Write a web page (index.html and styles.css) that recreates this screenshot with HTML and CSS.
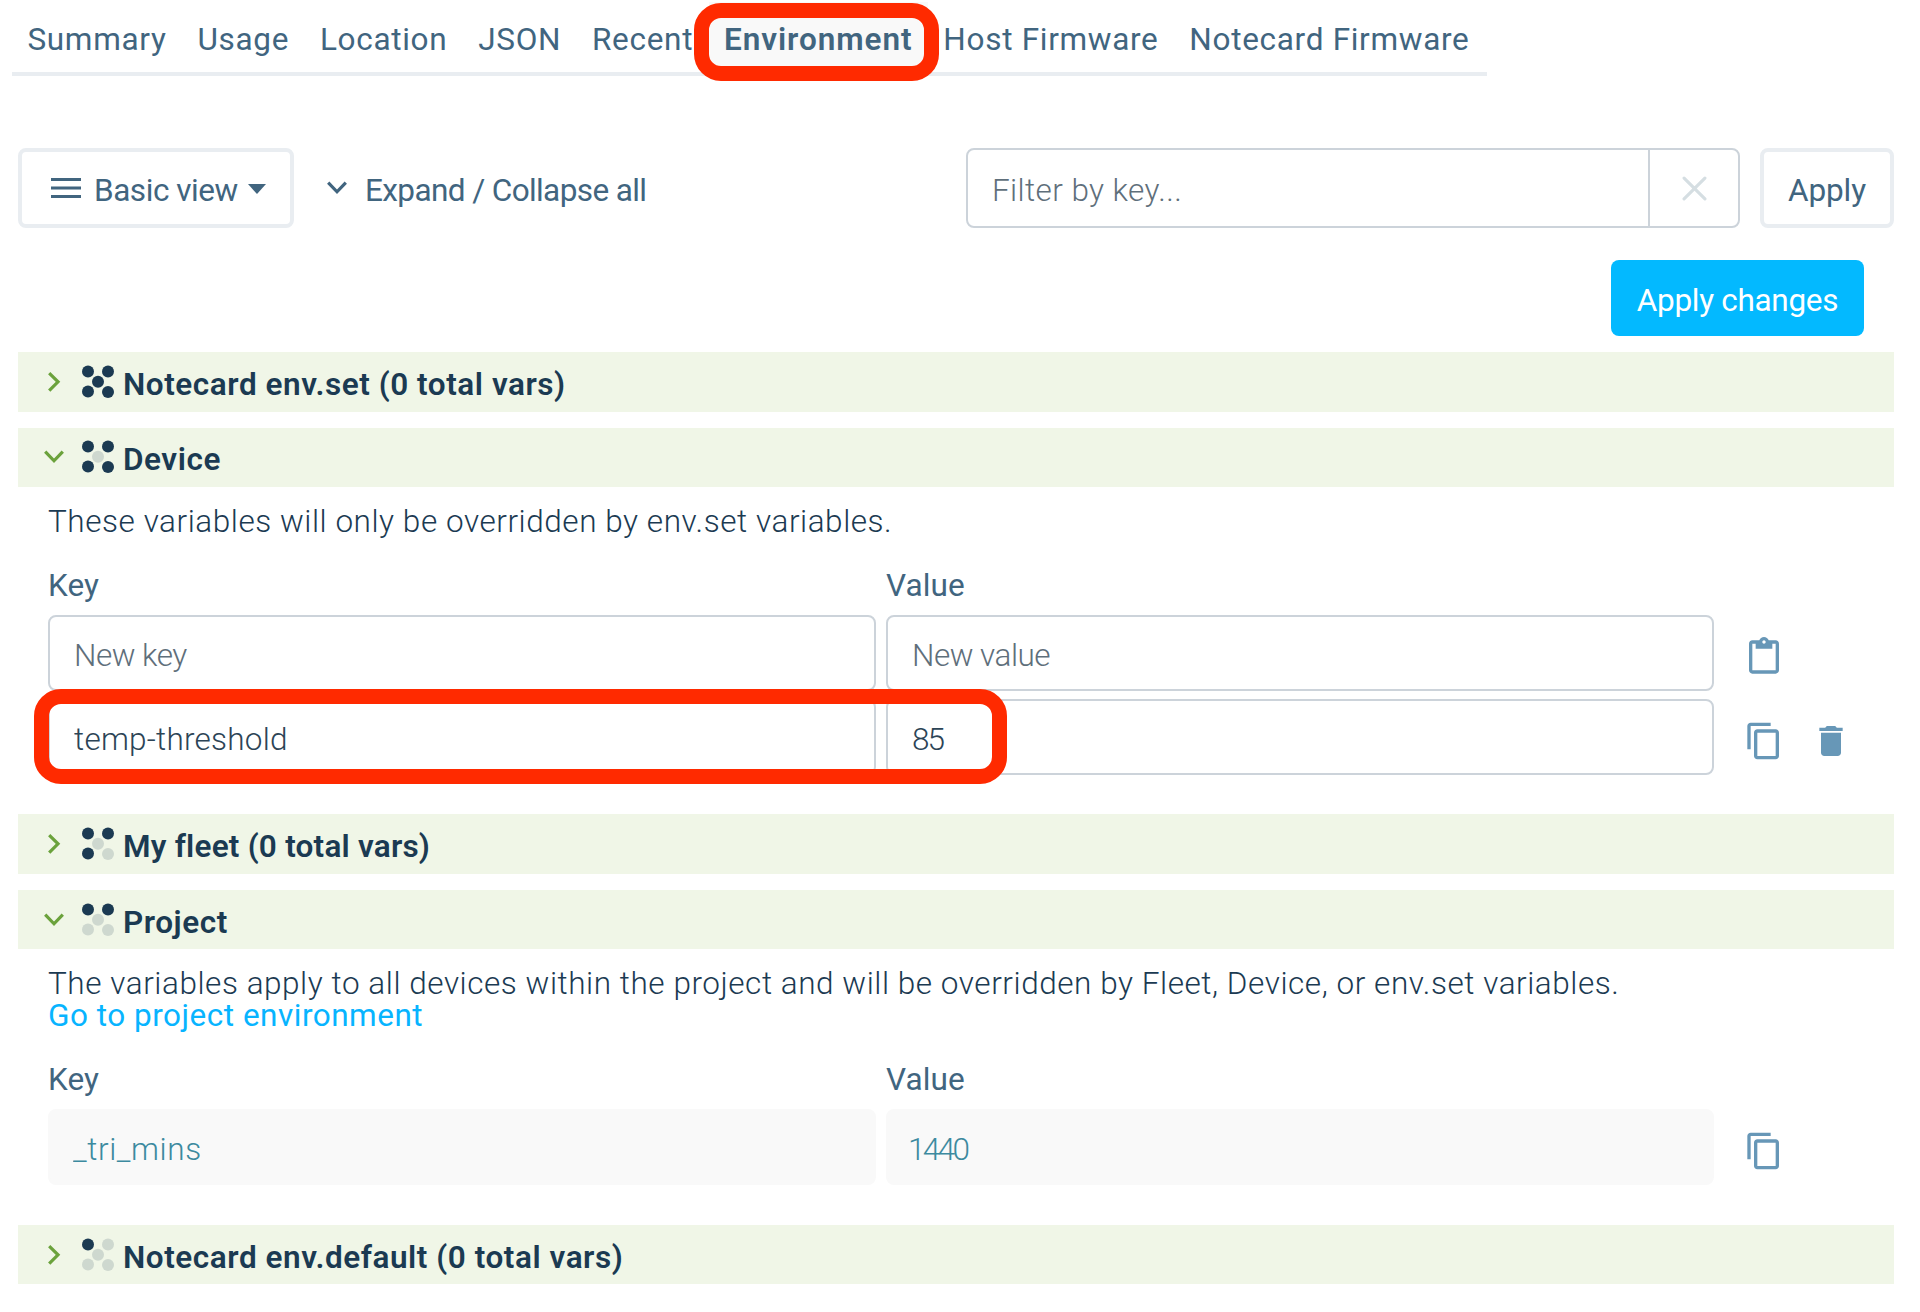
FILE: index.html
```html
<!DOCTYPE html>
<html lang="en">

<head>
    <meta charset="UTF-8">
    <meta name="viewport" content="width=device-width, initial-scale=1.0">
    <title>Device Environment</title>
    <link rel="stylesheet" href="styles.css">
</head>

<body>
    <!-- shared icons -->
    <svg class="sprite" width="0" height="0">
        <symbol id="chevron-right" viewBox="0 0 20 20">
            <path d="M5.2 1.2l8.8 8.6-8.8 8.8" fill="none" stroke="currentColor" stroke-width="3.2" />
        </symbol>
        <symbol id="chevron-down" viewBox="0 0 20 20">
            <path d="M1.2 4.6l8.8 9.2 8.8-9.2" fill="none" stroke="currentColor" stroke-width="3.2" />
        </symbol>
        <symbol id="copy" viewBox="0 0 24 24">
            <path d="M16 1H4c-1.1 0-2 .9-2 2v14h2V3h12V1zm3 4H8c-1.1 0-2 .9-2 2v14c0 1.1.9 2 2 2h11c1.1 0 2-.9 2-2V7c0-1.1-.9-2-2-2zm0 16H8V7h11v14z" />
        </symbol>
        <symbol id="paste" viewBox="0 0 24 24">
            <path d="M19 2h-4.18C14.4.84 13.3 0 12 0c-1.3 0-2.4.84-2.82 2H5c-1.1 0-2 .9-2 2v16c0 1.1.9 2 2 2h14c1.1 0 2-.9 2-2V4c0-1.1-.9-2-2-2zm-7 0c.55 0 1 .45 1 1s-.45 1-1 1-1-.45-1-1 .45-1 1-1zm7 18H5V4h2v3h10V4h2v16z" />
        </symbol>
        <symbol id="trash" viewBox="0 0 24 24">
            <path d="M6 19c0 1.1.9 2 2 2h8c1.1 0 2-.9 2-2V7H6v12zM19 4h-3.5l-1-1h-5l-1 1H5v2h14V4z" />
        </symbol>
    </svg>

    <nav class="tabs">
        <a class="tab">Summary</a>
        <a class="tab">Usage</a>
        <a class="tab">Location</a>
        <a class="tab">JSON</a>
        <a class="tab">Recent</a>
        <a class="tab active">Environment<span class="callout callout-tab"></span></a>
        <a class="tab">Host Firmware</a>
        <a class="tab">Notecard Firmware</a>
    </nav>

    <div class="toolbar">
        <button class="btn view-btn">
            <svg class="menu-icon" viewBox="0 0 30 20">
                <path d="M0 1.6h30M0 10h30M0 18.4h30" stroke="currentColor" stroke-width="3" />
            </svg>
            Basic view
            <span class="caret"></span>
        </button>
        <button class="expand-btn">
            <svg class="chevron"><use href="#chevron-down" /></svg>
            Expand / Collapse all
        </button>
        <div class="filter">
            <input type="text" class="filter-input" placeholder="Filter by key...">
            <button class="clear-btn">
                <svg class="clear-icon" viewBox="0 0 24 24">
                    <path d="M2 2l20 20M22 2L2 22" stroke="currentColor" stroke-width="3" stroke-linecap="round" />
                </svg>
            </button>
        </div>
        <button class="btn apply-btn">Apply</button>
    </div>

    <div class="actions">
        <button class="primary-btn">Apply changes</button>
    </div>

    <main class="sections">
        <section>
            <h2 class="section-header">
                <svg class="chevron"><use href="#chevron-right" /></svg>
                <svg class="dots" viewBox="0 0 32 34">
                    <circle class="on" cx="6" cy="6.5" r="6" />
                    <circle class="on" cx="26" cy="6.5" r="6" />
                    <circle class="on" cx="16" cy="16.8" r="6" />
                    <circle class="on" cx="6" cy="26.5" r="6" />
                    <circle class="on" cx="26" cy="27" r="6" />
                </svg>
                Notecard env.set (0 total vars)
            </h2>
        </section>

        <section>
            <h2 class="section-header">
                <svg class="chevron"><use href="#chevron-down" /></svg>
                <svg class="dots" viewBox="0 0 32 34">
                    <circle class="on" cx="6" cy="6.5" r="6" />
                    <circle class="on" cx="26" cy="6.5" r="6" />
                    <circle cx="16" cy="16.8" r="6" />
                    <circle class="on" cx="6" cy="26.5" r="6" />
                    <circle class="on" cx="26" cy="27" r="6" />
                </svg>
                Device
            </h2>
            <div class="section-body">
                <p class="description">These variables will only be overridden by env.set variables.</p>
                <div class="row labels">
                    <label>Key</label>
                    <label>Value</label>
                </div>
                <div class="row">
                    <input type="text" placeholder="New key">
                    <input type="text" placeholder="New value">
                    <svg class="icon"><use href="#paste" /></svg>
                </div>
                <div class="row">
                    <input type="text" class="key" value="temp-threshold">
                    <input type="text" class="number" value="85">
                    <svg class="icon"><use href="#copy" /></svg>
                    <svg class="icon"><use href="#trash" /></svg>
                    <span class="callout callout-row"></span>
                </div>
            </div>
        </section>

        <section>
            <h2 class="section-header fleet">
                <svg class="chevron"><use href="#chevron-right" /></svg>
                <svg class="dots" viewBox="0 0 32 34">
                    <circle class="on" cx="6" cy="6.5" r="6" />
                    <circle class="on" cx="26" cy="6.5" r="6" />
                    <circle cx="16" cy="16.8" r="6" />
                    <circle class="on" cx="6" cy="26.5" r="6" />
                    <circle cx="26" cy="27" r="6" />
                </svg>
                My fleet (0 total vars)
            </h2>
        </section>

        <section>
            <h2 class="section-header">
                <svg class="chevron"><use href="#chevron-down" /></svg>
                <svg class="dots" viewBox="0 0 32 34">
                    <circle class="on" cx="6" cy="6.5" r="6" />
                    <circle class="on" cx="26" cy="6.5" r="6" />
                    <circle cx="16" cy="16.8" r="6" />
                    <circle cx="6" cy="26.5" r="6" />
                    <circle cx="26" cy="27" r="6" />
                </svg>
                Project
            </h2>
            <div class="section-body">
                <p class="description">The variables apply to all devices within the project and will be overridden by Fleet, Device, or env.set variables.</p>
                <a class="project-link">Go to project environment</a>
                <div class="row labels">
                    <label>Key</label>
                    <label>Value</label>
                </div>
                <div class="row">
                    <input type="text" class="key" value="_tri_mins" disabled>
                    <input type="text" class="number" value="1440" disabled>
                    <svg class="icon"><use href="#copy" /></svg>
                </div>
            </div>
        </section>

        <section>
            <h2 class="section-header">
                <svg class="chevron"><use href="#chevron-right" /></svg>
                <svg class="dots" viewBox="0 0 32 34">
                    <circle class="on" cx="6" cy="6.5" r="6" />
                    <circle cx="26" cy="6.5" r="6" />
                    <circle cx="16" cy="16.8" r="6" />
                    <circle cx="6" cy="26.5" r="6" />
                    <circle cx="26" cy="27" r="6" />
                </svg>
                Notecard env.default (0 total vars)
            </h2>
        </section>
    </main>
</body>

</html>
```

FILE: styles.css
```css
* {
    box-sizing: border-box;
}

body {
    margin: 0;
    background-color: #fff;
    color: #1b3a52;
    font-family: Roboto, "Liberation Sans", sans-serif;
    font-size: 31.5px;
    line-height: 32px;
}

button,
input {
    font: inherit;
    color: inherit;
    margin: 0;
}

button {
    background: none;
    border: none;
    font-weight: 450;
    letter-spacing: -0.45px;
    color: #41657f;
    white-space: nowrap;
}

.sprite {
    display: block;
}

/* tabs */
.tabs {
    display: flex;
    width: 1475px;
    height: 76px;
    margin-left: 12px;
    padding-top: 2px;
    border-bottom: 4px solid #e9edf1;
}

.tab {
    padding: 22px 15.4px 0;
    font-weight: 450;
    letter-spacing: 0.7px;
    color: #41657f;
    white-space: nowrap;
}

.tab.active {
    position: relative;
    background-color: #f9f9f9;
    font-weight: 600;
    letter-spacing: 0.95px;
}

/* red highlight drawn over the page */
.callout {
    position: absolute;
    border: 15px solid #ff2a00;
    border-radius: 27px;
    pointer-events: none;
    z-index: 1;
}

.callout-tab {
    left: -15px;
    top: 1px;
    width: 245px;
    height: 78px;
}

.callout-row {
    left: -14px;
    top: -10px;
    width: 973px;
    height: 95px;
}

/* toolbar */
.toolbar {
    display: flex;
    height: 80px;
    margin: 72px 26px 0 18px;
}

.btn {
    border: 4px solid #e9edf1;
    border-radius: 8px;
    padding: 6px 0 0;
}

.view-btn {
    display: flex;
    align-items: center;
    width: 276px;
    padding-left: 29px;
}

.menu-icon {
    width: 30px;
    height: 20px;
    margin: -6px 13px 0 0;
}

.caret {
    margin: -5px 0 0 10px;
    border: 9px solid transparent;
    border-top: 10px solid #41657f;
    border-bottom: 0;
}

.chevron {
    width: 20px;
    height: 20px;
    flex-shrink: 0;
}

.expand-btn {
    display: flex;
    align-items: center;
    gap: 18px;
    padding: 6px 0 0 33px;
    letter-spacing: -0.6px;
}

.expand-btn .chevron {
    margin-top: -6px;
}

.filter {
    display: flex;
    width: 774px;
    margin-left: auto;
    border: 2px solid #ccd3da;
    border-radius: 8px;
}

.filter-input {
    flex: 1;
    min-width: 0;
    padding: 4px 24px 0;
    border: none;
    background: none;
    font-weight: 300;
    letter-spacing: 0.4px;
}

::placeholder {
    color: #5f6f7b;
    opacity: 1;
}

.clear-btn {
    display: flex;
    align-items: center;
    justify-content: center;
    width: 90px;
    padding: 0;
    border-left: 2px solid #ccd3da;
    color: #d5dee2;
}

.clear-icon {
    width: 25px;
    height: 25px;
}

.apply-btn {
    width: 134px;
    margin-left: 20px;
    letter-spacing: -0.1px;
}

.actions {
    display: flex;
    justify-content: flex-end;
    padding: 32px 56px 16px 0;
}

.primary-btn {
    width: 253px;
    height: 76px;
    padding: 6px 0 0;
    border-radius: 8px;
    background-color: #03b9ff;
    color: #fff;
    letter-spacing: -0.3px;
}

/* variable sections */
.sections {
    display: flex;
    flex-direction: column;
    gap: 16px;
    margin: 0 26px 0 18px;
}

.section-header {
    display: flex;
    align-items: center;
    height: 59.5px;
    margin: 0;
    padding: 6px 26px 0;
    background-color: #f0f6e7;
    font-size: inherit;
    font-weight: 560;
    letter-spacing: 0.55px;
}

.section-header.fleet {
    letter-spacing: 0.22px;
}

.section-header .chevron {
    margin-top: -6px;
    color: #6ba23c;
}

.dots {
    width: 32px;
    height: 34px;
    margin: -6px 9px 0 18px;
    fill: #ced8cf;
}

.dots .on {
    fill: #1b3a52;
}

.section-body {
    padding: 19px 0 15.4px 30px;
}

.description {
    margin: 0;
    font-weight: 300;
    letter-spacing: 0.55px;
    white-space: nowrap;
}

.project-link {
    display: block;
    font-weight: 450;
    letter-spacing: 0.5px;
    color: #07b4ff;
}

.row {
    position: relative;
    display: grid;
    grid-template-columns: 828px 828px 40px 40px;
    column-gap: 10px;
    margin-bottom: 8px;
}

.row.labels {
    margin: 32px 0 13px;
    font-weight: 450;
    letter-spacing: 0.1px;
    color: #41657f;
}

.row input {
    width: 100%;
    height: 76px;
    padding: 4px 24px 0;
    border: 2px solid #ccd3da;
    border-radius: 8px;
    background-color: #fff;
    font-weight: 300;
    letter-spacing: -0.5px;
    color: #2c4456;
}

.row .key {
    letter-spacing: 0.24px;
}

.row .number {
    letter-spacing: -2px;
}

.row input:disabled {
    padding-left: 22px;
    border-color: #f9f9f9;
    background-color: #f9f9f9;
    color: #3c8a9f;
}

.row .key:disabled {
    padding-left: 23px;
    letter-spacing: 0.6px;
}

.row .number:disabled {
    padding-left: 20px;
    letter-spacing: -2.6px;
}

.icon {
    width: 40px;
    height: 40px;
    margin: 22px 0 0 20px;
    fill: #6797b7;
}

.icon + .icon {
    margin-left: 37px;
}
```
